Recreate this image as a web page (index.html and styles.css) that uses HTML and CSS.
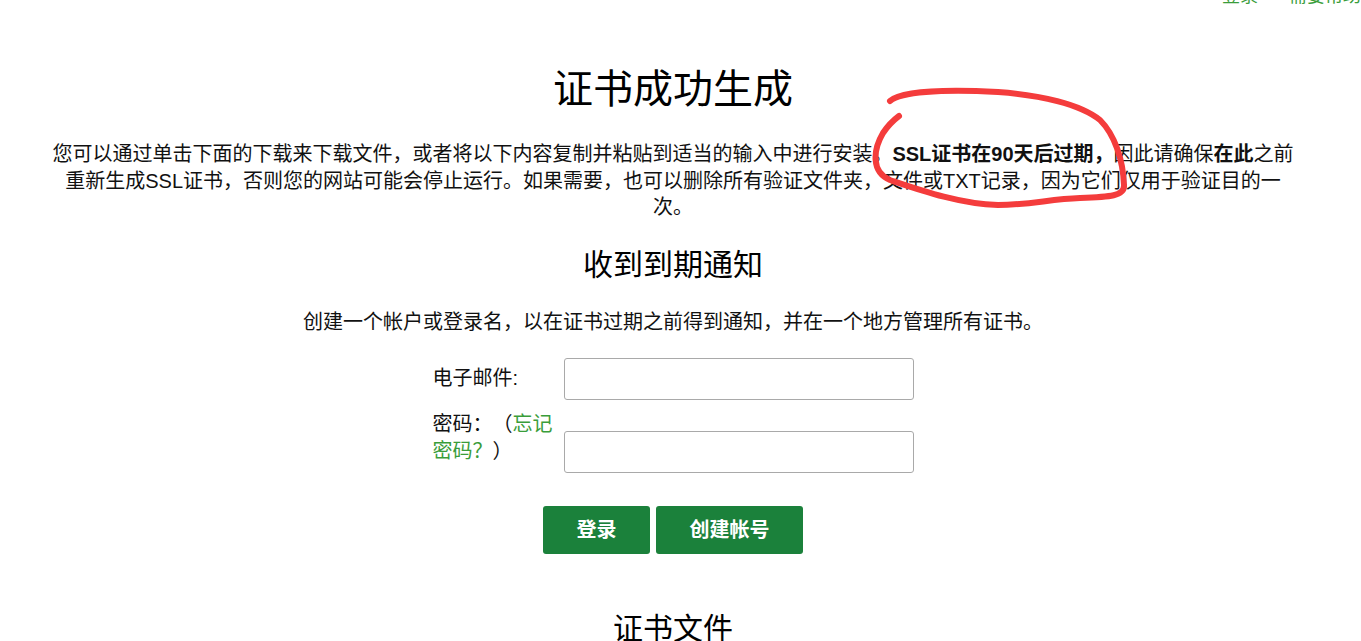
FILE: index.html
```html
<!DOCTYPE html>
<html lang="zh-CN">
<head>
    <meta charset="UTF-8">
    <meta name="viewport" content="width=device-width, initial-scale=1.0">
    <title>证书成功生成</title>
    <link rel="stylesheet" href="styles.css">
</head>
<body>
    <div class="top-nav">
        <a href="#" class="nav-link">登录</a>
        <a href="#" class="nav-link">需要帮助</a>
    </div>

    <div class="page">
        <h1 class="title">证书成功生成</h1>
        <p class="intro">您可以通过单击下面的下载来下载文件，或者将以下内容复制并粘贴到适当的输入中进行安装。<b>SSL证书在90天后过期，</b>因此请确保<b>在此</b>之前重新生成SSL证书，否则您的网站可能会停止运行。如果需要，也可以删除所有验证文件夹，文件或TXT记录，因为它们仅用于验证目的一次。</p>

        <h2 class="section-title">收到到期通知</h2>
        <p class="section-text">创建一个帐户或登录名，以在证书过期之前得到通知，并在一个地方管理所有证书。</p>

        <form class="login-form" onsubmit="return false;">
            <div class="form-row">
                <label class="form-label form-label-first" for="email">电子邮件:</label>
                <input class="form-input" type="email" id="email">
            </div>
            <div class="form-row form-row-password">
                <label class="form-label" for="password">密码：（<a href="#" class="link">忘记密码？</a>）</label>
                <input class="form-input form-input-low" type="password" id="password">
            </div>
            <div class="form-buttons">
                <button class="btn" type="submit">登录</button>
                <button class="btn" type="button">创建帐号</button>
            </div>
        </form>

        <h2 class="section-title files-title">证书文件</h2>
    </div>

    <!-- 手画的红圈标注 -->
    <svg class="annotation" width="1361" height="641" viewBox="0 0 1361 641">
        <path d="M890,101 C900,92 940,89 998,92 C1040,95 1080,104 1100,120 C1115,135 1123,160 1124,185 C1125,196 1110,197 1080,198 C1050,199 1030,205 998,205 C960,204 920,190 890,180 C871,172 873,150 883,133 C889,124 895,119 899,116" fill="none" stroke="#f43c3c" stroke-width="6" stroke-linecap="round" stroke-linejoin="round"/>
    </svg>
</body>
</html>
```

FILE: styles.css
```css
html, body {
    overflow: hidden;
}
body {
    font-family: 'Liberation Sans', 'Noto Sans CJK SC', sans-serif;
    font-size: 20px;
    line-height: 1.33;
    margin: 0;
    background-color: #fff;
    color: #111;
    text-spacing-trim: space-all;
}
.top-nav {
    display: flex;
    justify-content: flex-end;
    gap: 31px;
    margin-top: -15px;
    font-size: 18px;
}
.nav-link {
    color: #3a9d3a;
    text-decoration: none;
}
.page {
    width: 1346px;
    text-align: center;
}
.title {
    font-size: 40px;
    font-weight: normal;
    margin: 54px 0 0;
    color: #000;
}
.intro {
    max-width: 1250px;
    margin: 25px auto 0;
}
.intro b {
    font-weight: bold;
}
.section-title {
    font-size: 30px;
    font-weight: normal;
    margin: 24px 0 0;
    color: #000;
}
.section-text {
    margin: 24px 0 0;
}
.login-form {
    width: 481px;
    margin: 23px auto 0;
    text-align: left;
}
.form-row {
    display: flex;
    align-items: flex-start;
    gap: 6px;
}
.form-row-password {
    margin-top: 11px;
}
.form-label {
    width: 125px;
    flex-shrink: 0;
}
.form-label-first {
    padding-top: 7px;
}
.link {
    color: #3a9d3a;
    text-decoration: none;
}
.form-input {
    width: 350px;
    height: 42px;
    box-sizing: border-box;
    border: 1px solid #a9a9a9;
    border-radius: 3px;
    padding: 0 10px;
    font-size: 18px;
    font-family: inherit;
    margin: 0;
}
.form-input-low {
    margin-top: 20px;
}
.form-buttons {
    display: flex;
    justify-content: center;
    gap: 6px;
    margin-top: 33px;
}
.btn {
    background-color: #1b813b;
    color: white;
    border: none;
    height: 48px;
    padding: 0 33.5px;
    border-radius: 3px;
    font-family: inherit;
    font-size: 20px;
    font-weight: bold;
    line-height: 48px;
    cursor: pointer;
}
.btn:hover {
    background-color: #166a30;
}
.files-title {
    margin-top: 55px;
}
.annotation {
    position: absolute;
    top: 0;
    left: 0;
    pointer-events: none;
}
```
